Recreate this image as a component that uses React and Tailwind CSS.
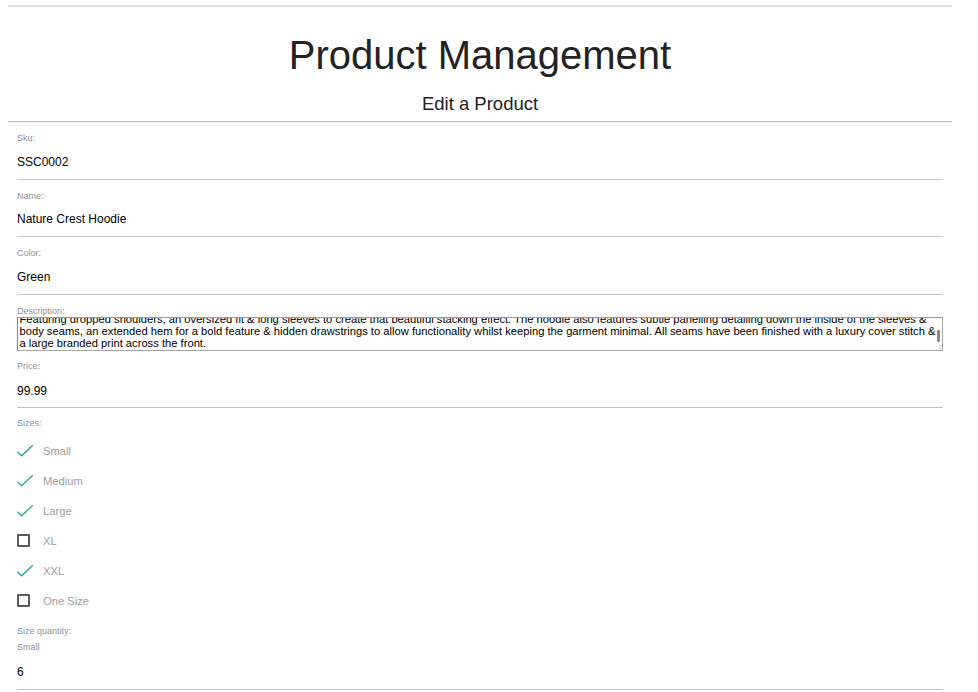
import React from "react";

function Label({ children, className = "" }) {
  return (
    <div className={"text-[9px] leading-[11px] text-[#929292] " + className}>{children}</div>
  );
}

function Field({ label, value, pt = "pt-[11px]", h = "h-[34.5px]" }) {
  return (
    <div className={pt}>
      <Label>{label}</Label>
      <div className={h + " flex items-center text-[12px] text-black border-b border-[#c2c2c2] box-content"}>
        {value}
      </div>
    </div>
  );
}

function Check() {
  return (
    <svg width="17" height="14" viewBox="0 0 17 14" className="block">
      <path d="M0.3 7.6 L4.6 11.8 L15.8 1.2" fill="none" stroke="#26a69a" strokeWidth="1.3" />
    </svg>
  );
}

function SizeRow({ label, checked }) {
  return (
    <div className="h-[30px] flex items-center">
      <div className="w-[26px] flex items-center">
        {checked ? (
          <Check />
        ) : (
          <div className="w-[13px] h-[13px] border-2 border-[#5a5a5a] rounded-[1px] -mt-[1px]" />
        )}
      </div>
      <span className="text-[11.2px] text-[#9e9e9e]">{label}</span>
    </div>
  );
}

export default function App() {
  const sizes = [
    ["Small", true],
    ["Medium", true],
    ["Large", true],
    ["XL", false],
    ["XXL", true],
    ["One Size", false],
  ];
  return (
    <div className="w-[978px] h-[692px] overflow-hidden bg-white font-['Liberation_Sans',Arial,sans-serif]">
      <div className="ml-2 w-[944px]">
        <div className="pt-[5px]">
          <div className="h-[2px] bg-[#e0e0e0]" />
        </div>
        <h1 className="mt-[28.4px] text-[40px] leading-[40px] text-center text-[#222]">Product Management</h1>
        <h2 className="mt-[19.9px] text-[18.5px] leading-[18.5px] text-center text-[#222]">Edit a Product</h2>
        <div className="mt-[7.2px] h-[2px] border-t border-[#c4c4c4] bg-[#f0f0f0]" />
        <div className="px-[9px]">
          <Field label="Sku:" value="SSC0002" pt="pt-[10.5px]" />
          <Field label="Name:" value="Nature Crest Hoodie" />
          <Field label="Color:" value="Green" />
          <div className="pt-[11px]">
            <Label>Description:</Label>
            <div className="relative h-[34px] border border-[#a8a8a8] border-l-[#8c8c8c] border-t-[#9a9a9a] overflow-hidden flex flex-col justify-end pb-[1px] pl-[1.5px]">
              <div className="text-[11.2px] leading-[12px] text-black whitespace-nowrap">
                <div>Featuring dropped shoulders, an oversized fit &amp; long sleeves to create that beautiful stacking effect. The hoodie also features subtle panelling detailing down the inside of the sleeves &amp;</div>
                <div>body seams, an extended hem for a bold feature &amp; hidden drawstrings to allow functionality whilst keeping the garment minimal. All seams have been finished with a luxury cover stitch &amp;</div>
                <div>a large branded print across the front.</div>
              </div>
              <div className="absolute right-[2px] top-[12px] w-[3px] h-[12px] rounded-[1px] bg-[#8a8a8a]" />
              <svg className="absolute right-0 bottom-0" width="6" height="6" viewBox="0 0 6 6">
                <path d="M5.5 1 L1 5.5 M5.5 3.5 L3.5 5.5" stroke="#b0b0b0" strokeWidth="0.8" />
              </svg>
            </div>
          </div>
          <div className="pt-[10px]">
            <Label>Price:</Label>
            <div className="h-[32px] pt-[3px] flex items-center text-[12px] text-black border-b border-[#c2c2c2] box-content">99.99</div>
          </div>
          <div className="pt-[10.5px]">
            <Label>Sizes:</Label>
            <div className="mt-[7px]">
              {sizes.map(([l, c]) => (
                <SizeRow key={l} label={l} checked={c} />
              ))}
            </div>
          </div>
          <div className="pt-[9.5px]">
            <Label>Size quantity:</Label>
            <Label className="mt-[5.5px]">Small</Label>
            <div className="h-[33px] pt-[2.5px] flex items-center text-[12px] text-black border-b border-[#c2c2c2] box-content">6</div>
          </div>
        </div>
      </div>
    </div>
  );
}
